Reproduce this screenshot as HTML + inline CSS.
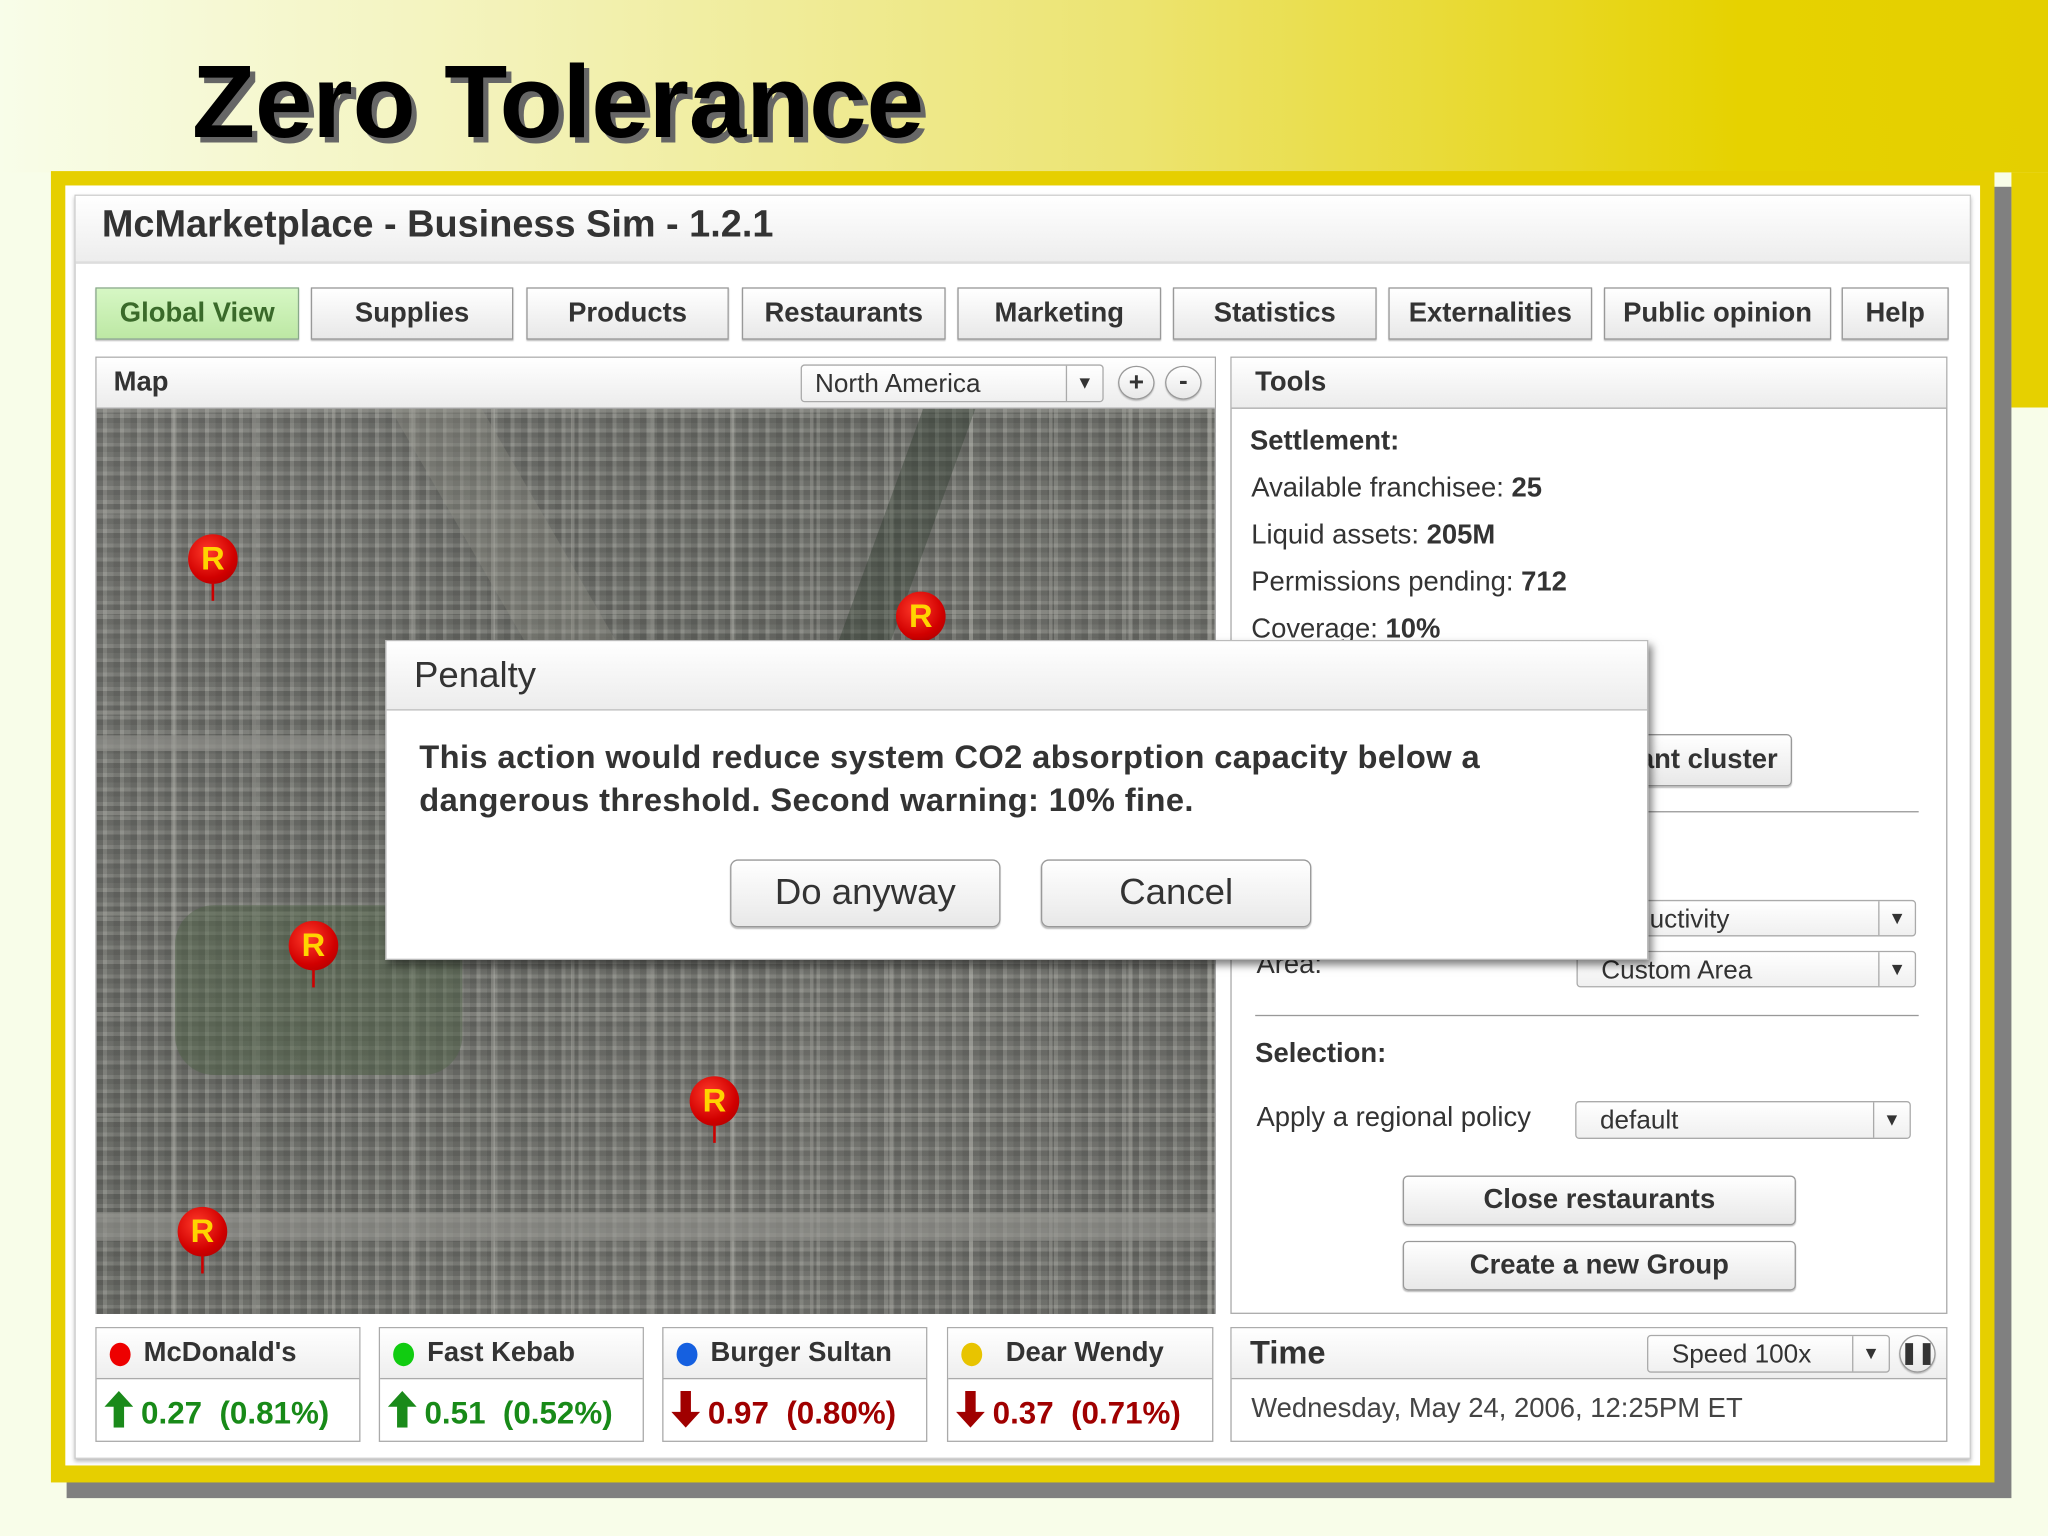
<!DOCTYPE html>
<html><head><meta charset="utf-8"><style>
*{margin:0;padding:0;box-sizing:border-box}
html,body{width:2048px;height:1536px;overflow:hidden;background:#f8fde9}
#w{position:absolute;left:0;top:0;width:1568px;height:1176px;transform:scale(1.306122);transform-origin:0 0;font-family:"Liberation Sans",Arial,sans-serif;color:#333;
background:linear-gradient(90deg,#f8fde9 0%,#f3f2b8 25%,#ece472 55%,#e6d200 85%,#e4cf00 100%) 0 0/1568px 132px no-repeat,#f8fde9}
.a{position:absolute}
.title{left:147px;top:32px;font-size:79px;font-weight:bold;color:#000;text-shadow:4px 4px 0 #666}
.btn{position:absolute;border:1px solid #999;border-radius:4px;background:linear-gradient(#fff,#e8e8e8);text-align:center;font-weight:bold;color:#333;box-shadow:0 1px 1px #bbb}
.panel{position:absolute;border:1px solid #aaa;background:#fff}
.ph{position:absolute;left:0;right:0;top:0;border-bottom:1px solid #aaa;background:linear-gradient(#fff,#ececec);font-weight:bold;font-size:21px}
.sel{position:absolute;border:1px solid #aaa;border-radius:3px;background:linear-gradient(#fff,#f0f0f0);font-size:20px;color:#333;padding-left:18px;line-height:28px}
.sel:after{content:"▾";position:absolute;right:0;top:0;width:27px;height:100%;border-left:1px solid #aaa;text-align:center;font-size:16px}
.t{position:absolute;font-size:21px;color:#333}
.pin{position:absolute;width:38px;height:38px;border-radius:50%;background:radial-gradient(circle at 40% 35%,#ff3a2a,#d10000 60%,#a00000);color:#ffd400;font-weight:bold;font-size:25px;text-align:center;line-height:38px}
.pin:after{content:"";position:absolute;left:18px;top:37px;width:2px;height:14px;background:#c00}
.co{position:absolute;top:1016px;height:88px;border:1px solid #aaa;background:#fff}
.co .h{position:absolute;left:0;right:0;top:0;height:39px;border-bottom:1px solid #aaa;background:linear-gradient(#fff,#eee);font-size:21px;font-weight:bold;line-height:38px;padding-left:36px}
.co .h i{position:absolute;left:10px;top:11px;width:16px;height:18px;border-radius:50%}
.co .v{position:absolute;left:6px;top:48px;font-size:24px;font-weight:bold;white-space:pre}
.co .v svg{vertical-align:-3px;margin-right:6px}
.g{color:#188a18}.r{color:#a00000}
</style></head><body><div id="w">
<div class="a title">Zero Tolerance</div>
<div class="a" style="left:1540px;top:132px;width:28px;height:180px;background:#e6d000"></div>
<div class="a" style="left:51px;top:143px;width:1489px;height:1004px;background:#808080"></div>
<div class="a" style="left:39px;top:131px;width:1488px;height:1004px;background:#e6cf00"></div>
<div class="a" style="left:50px;top:142px;width:1466px;height:980px;background:#fff"></div>
<div class="a" style="left:57px;top:149px;width:1452px;height:968px;border:1px solid #ccc;background:#fff;box-shadow:0 2px 3px #bbb"></div>
<div class="a" style="left:58px;top:150px;width:1450px;height:52px;background:linear-gradient(#fff,#ededed);border-bottom:2px solid #ddd"></div>
<div class="a" style="left:78px;top:156px;font-size:29px;font-weight:bold;color:#333">McMarketplace - Business Sim - 1.2.1</div>

<div class="btn" style="left:73px;top:220px;width:156px;height:40px;background:linear-gradient(#d6f7c4,#bde8a4);border-color:#8a8;line-height:38px;font-size:21px;color:#3a6a2a;border-radius:0">Global View</div>
<div class="btn" style="left:238px;top:220px;width:155px;height:40px;line-height:38px;font-size:21px;border-radius:0">Supplies</div>
<div class="btn" style="left:403px;top:220px;width:155px;height:40px;line-height:38px;font-size:21px;border-radius:0">Products</div>
<div class="btn" style="left:568px;top:220px;width:156px;height:40px;line-height:38px;font-size:21px;border-radius:0">Restaurants</div>
<div class="btn" style="left:733px;top:220px;width:156px;height:40px;line-height:38px;font-size:21px;border-radius:0">Marketing</div>
<div class="btn" style="left:898px;top:220px;width:156px;height:40px;line-height:38px;font-size:21px;border-radius:0">Statistics</div>
<div class="btn" style="left:1063px;top:220px;width:156px;height:40px;line-height:38px;font-size:21px;border-radius:0">Externalities</div>
<div class="btn" style="left:1228px;top:220px;width:174px;height:40px;line-height:38px;font-size:21px;border-radius:0">Public opinion</div>
<div class="btn" style="left:1410px;top:220px;width:82px;height:40px;line-height:38px;font-size:21px;border-radius:0">Help</div>

<!-- Map panel -->
<div class="panel" style="left:73px;top:273px;width:858px;height:733px">
 <div class="ph" style="height:39px;line-height:38px;padding-left:13px">Map</div>
 <div class="sel" style="left:539px;top:5px;width:232px;height:29px;padding-left:10px">North America</div>
 <div class="btn" style="left:782px;top:6px;width:28px;height:26px;border-radius:50%;font-size:20px;line-height:24px">+</div>
 <div class="btn" style="left:818px;top:6px;width:28px;height:26px;border-radius:50%;font-size:20px;line-height:22px">-</div>
 <div class="a" style="left:0;top:39px;width:856px;height:693px;overflow:hidden;
 background:
 repeating-linear-gradient(90deg,transparent 0 58px,rgba(185,185,178,.35) 58px 61px),
 repeating-linear-gradient(0deg,transparent 0 74px,rgba(185,185,178,.3) 74px 77px),
 repeating-linear-gradient(90deg,rgba(50,50,50,.18) 0 5px,rgba(200,200,195,.18) 5px 8px,rgba(90,90,90,.1) 8px 13px),
 repeating-linear-gradient(0deg,rgba(40,40,40,.16) 0 4px,rgba(210,210,205,.16) 4px 7px,rgba(90,90,90,.1) 7px 11px),
 linear-gradient(135deg,#7c7d78,#6f716b 40%,#797a74 70%,#71726d)">
  <div class="a" style="left:0;top:250px;width:856px;height:12px;background:rgba(150,150,145,.6)"></div>
  <div class="a" style="left:0;top:615px;width:856px;height:22px;background:rgba(150,150,145,.6)"></div>
  <div class="a" style="left:60px;top:380px;width:220px;height:130px;background:rgba(80,100,70,.45);border-radius:30px"></div>
  <div class="a" style="left:300px;top:0;width:70px;height:260px;background:rgba(150,150,140,.3);transform:skewX(30deg)"></div>
  <div class="a" style="left:600px;top:0;width:40px;height:180px;background:rgba(40,55,40,.35);transform:skewX(-20deg)"></div>
 </div>
</div>
<div class="pin" style="left:144px;top:409px">R</div>
<div class="pin" style="left:686px;top:453px">R</div>
<div class="pin" style="left:221px;top:705px">R</div>
<div class="pin" style="left:528px;top:824px">R</div>
<div class="pin" style="left:136px;top:924px">R</div>

<!-- Tools panel -->
<div class="panel" style="left:942px;top:273px;width:549px;height:733px">
 <div class="ph" style="height:39px;line-height:38px;padding-left:18px">Tools</div>
</div>
<div class="t" style="left:957px;top:326px;font-weight:bold">Settlement:</div>
<div class="t" style="left:958px;top:362px">Available franchisee: <b>25</b></div>
<div class="t" style="left:958px;top:398px">Liquid assets: <b>205M</b></div>
<div class="t" style="left:958px;top:434px">Permissions pending: <b>712</b></div>
<div class="t" style="left:958px;top:470px">Coverage: <b>10%</b></div>
<div class="btn" style="left:1160px;top:562px;width:212px;height:40px;line-height:38px;font-size:21px;text-align:right;padding-right:10px">ant cluster</div>
<div class="a" style="left:1262px;top:621px;width:207px;height:1px;background:#999"></div>
<div class="sel" style="left:1207px;top:689px;width:260px;height:28px;padding-left:55px">uctivity</div>
<div class="t" style="left:962px;top:727px">Area:</div>
<div class="sel" style="left:1207px;top:728px;width:260px;height:28px">Custom Area</div>
<div class="a" style="left:961px;top:777px;width:508px;height:1px;background:#999"></div>
<div class="t" style="left:961px;top:795px;font-weight:bold">Selection:</div>
<div class="t" style="left:962px;top:844px">Apply a regional policy</div>
<div class="sel" style="left:1206px;top:843px;width:257px;height:29px">default</div>
<div class="btn" style="left:1074px;top:900px;width:301px;height:38px;line-height:36px;font-size:21px">Close restaurants</div>
<div class="btn" style="left:1074px;top:950px;width:301px;height:38px;line-height:36px;font-size:21px">Create a new Group</div>

<!-- Dialog -->
<div class="a" style="left:295px;top:490px;width:967px;height:245px;background:#fff;border:1px solid #bbb;box-shadow:3px 4px 6px rgba(0,0,0,.5)">
 <div class="a" style="left:0;top:0;width:965px;height:53px;background:linear-gradient(#fff,#ececec);border-bottom:1px solid #bbb;font-size:28px;line-height:52px;padding-left:21px;color:#333">Penalty</div>
 <div class="a" style="left:25px;top:73px;font-size:25px;font-weight:bold;line-height:33px;color:#333;letter-spacing:0.3px">This action would reduce system CO2 absorption capacity below a<br>dangerous threshold. Second warning: 10% fine.</div>
 <div class="btn" style="left:263px;top:167px;width:207px;height:52px;line-height:48px;font-size:28px;font-weight:normal;border-radius:6px">Do anyway</div>
 <div class="btn" style="left:501px;top:167px;width:207px;height:52px;line-height:48px;font-size:28px;font-weight:normal;border-radius:6px">Cancel</div>
</div>

<!-- Bottom -->
<div class="co" style="left:73px;width:203px"><div class="h"><i style="background:#e00"></i>McDonald's</div><div class="v g"><svg width="22" height="28" viewBox="0 0 22 28"><path d="M11 0 L22 12 L15 12 L15 28 L7 28 L7 12 L0 12Z" fill="#1a8a1a"/></svg>0.27  (0.81%)</div></div>
<div class="co" style="left:290px;width:203px"><div class="h"><i style="background:#1c1"></i>Fast Kebab</div><div class="v g"><svg width="22" height="28" viewBox="0 0 22 28"><path d="M11 0 L22 12 L15 12 L15 28 L7 28 L7 12 L0 12Z" fill="#1a8a1a"/></svg>0.51  (0.52%)</div></div>
<div class="co" style="left:507px;width:203px"><div class="h"><i style="background:#1560e0"></i>Burger Sultan</div><div class="v r"><svg width="22" height="28" viewBox="0 0 22 28"><path d="M11 28 L22 16 L15 16 L15 0 L7 0 L7 16 L0 16Z" fill="#a00000"/></svg>0.97  (0.80%)</div></div>
<div class="co" style="left:725px;width:204px"><div class="h" style="padding-left:44px"><i style="background:#e8c400"></i>Dear Wendy</div><div class="v r"><svg width="22" height="28" viewBox="0 0 22 28"><path d="M11 28 L22 16 L15 16 L15 0 L7 0 L7 16 L0 16Z" fill="#a00000"/></svg>0.37  (0.71%)</div></div>
<div class="co" style="left:942px;width:549px"><div class="h" style="padding-left:14px;font-size:25px">Time</div>
 <div class="sel" style="left:318px;top:5px;width:186px;height:29px">Speed 100x</div>
 <div class="btn" style="left:511px;top:5px;width:28px;height:29px;border-radius:50%;font-size:16px;line-height:27px">❚❚</div>
 <div class="a" style="left:15px;top:50px;font-size:21px;color:#444">Wednesday, May 24, 2006, 12:25PM ET</div></div>
</div></body></html>
